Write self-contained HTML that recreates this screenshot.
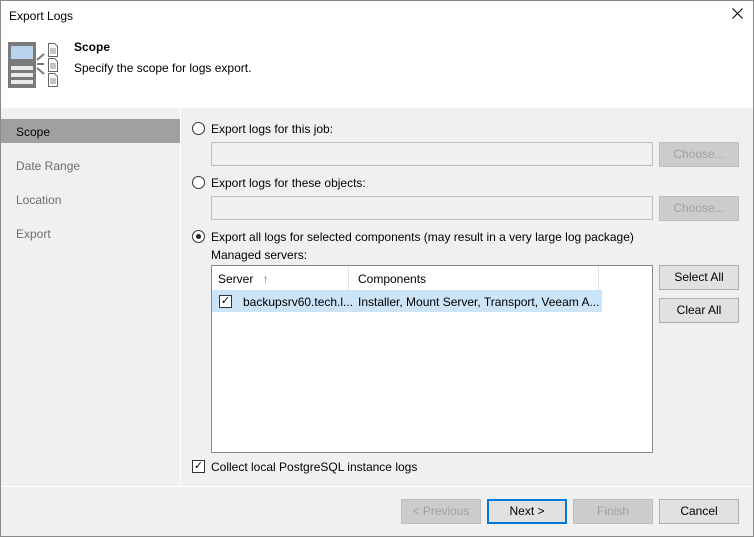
<!DOCTYPE html>
<html><head><style>
*{box-sizing:border-box;margin:0;padding:0}
body{width:754px;height:537px;font-family:"Liberation Sans",sans-serif;font-size:12px;color:#000;background:#f0f0f0;position:relative;overflow:hidden}
.abs{position:absolute}
.win{position:absolute;left:0;top:0;width:754px;height:537px;border:1px solid #8a8a8a}
.btn{position:absolute;height:25px;border:1px solid #adadad;background:#e1e1e1;text-align:center;line-height:23px;font-size:12px}
.dis{background:#ccc;border-color:#bfbfbf;color:#a0a0a0}
.field{position:absolute;height:24px;background:#f0f0f0;border:1px solid #bcbcbc}
.radio{position:absolute;width:13px;height:13px;border:1px solid #333;border-radius:50%;background:#fff}
</style></head><body>
<div class="abs" style="left:0;top:0;width:754px;height:108px;background:#fff"></div>
<div class="abs" style="left:9px;top:9px;">Export Logs</div>
<svg class="abs" style="left:732px;top:8px" width="11" height="11"><path d="M0.5 0.5L10.5 10.5M10.5 0.5L0.5 10.5" stroke="#000" stroke-width="1.1"/></svg>
<svg class="abs" style="left:8px;top:42px" width="52" height="48">
<rect x="0" y="0" width="28" height="46" fill="#7a7a7a"/>
<rect x="3" y="4" width="22" height="13" fill="#b9d3ee"/>
<rect x="3" y="24" width="22" height="4" fill="#fff" opacity=".85"/>
<rect x="3" y="31" width="22" height="4" fill="#fff" opacity=".85"/>
<rect x="3" y="38" width="22" height="4" fill="#fff" opacity=".85"/>
<path d="M29 18L36 12M29 22H36M29 26L36 32" stroke="#7a7a7a" stroke-width="2"/>
<g fill="#fff" stroke="#666" stroke-width="1"><path d="M40.5 1.5h6l3 3v10h-9z"/><path d="M40.5 16.5h6l3 3v10h-9z"/><path d="M40.5 31.5h6l3 3v10h-9z"/></g>
<g stroke="#888" stroke-width="1"><path d="M42 7h6M42 9h6M42 11h6M42 22h6M42 24h6M42 26h6M42 37h6M42 39h6M42 41h6"/></g>
</svg>
<div class="abs" style="left:74px;top:40px;font-weight:bold">Scope</div>
<div class="abs" style="left:74px;top:61px">Specify the scope for logs export.</div>
<div class="abs" style="left:180px;top:108px;width:1px;height:378px;background:#fff"></div>
<div class="abs" style="left:0;top:119px;width:180px;height:24px;background:#a0a0a0"></div>
<div class="abs" style="left:16px;top:125px">Scope</div>
<div class="abs" style="left:16px;top:159px;color:#6d6d6d">Date Range</div>
<div class="abs" style="left:16px;top:193px;color:#6d6d6d">Location</div>
<div class="abs" style="left:16px;top:227px;color:#6d6d6d">Export</div>
<div class="radio" style="left:192px;top:122px"></div>
<div class="abs" style="left:211px;top:122px">Export logs for this job:</div>
<div class="field" style="left:211px;top:142px;width:442px"></div>
<div class="btn dis" style="left:659px;top:142px;width:80px;height:25px">Choose...</div>
<div class="radio" style="left:192px;top:176px"></div>
<div class="abs" style="left:211px;top:176px">Export logs for these objects:</div>
<div class="field" style="left:211px;top:196px;width:442px"></div>
<div class="btn dis" style="left:659px;top:196px;width:80px">Choose...</div>
<div class="radio" style="left:192px;top:230px"><div class="abs" style="left:3px;top:3px;width:5px;height:5px;border-radius:50%;background:#222"></div></div>
<div class="abs" style="left:211px;top:230px">Export all logs for selected components (may result in a very large log package)</div>
<div class="abs" style="left:211px;top:248px">Managed servers:</div>
<div class="abs" style="left:211px;top:265px;width:442px;height:188px;background:#fff;border:1px solid #828790"></div>
<div class="abs" style="left:348px;top:266px;width:1px;height:24px;background:#e5e5e5"></div>
<div class="abs" style="left:598px;top:266px;width:1px;height:24px;background:#e5e5e5"></div>
<div class="abs" style="left:218px;top:272px">Server <span style="color:#3a7ec0;margin-left:6px">↑</span></div>
<div class="abs" style="left:358px;top:272px">Components</div>
<div class="abs" style="left:212px;top:290px;width:390px;height:22px;background:#cce4f7"></div>
<div class="abs" style="left:219px;top:295px;width:13px;height:13px;border:1px solid #333;background:#fff;font-size:11px;line-height:11px;text-align:center">✓</div>
<div class="abs" style="left:243px;top:295px">backupsrv60.tech.l...</div>
<div class="abs" style="left:358px;top:295px">Installer, Mount Server, Transport, Veeam A...</div>
<div class="btn" style="left:659px;top:265px;width:80px">Select All</div>
<div class="btn" style="left:659px;top:298px;width:80px">Clear All</div>
<div class="abs" style="left:192px;top:460px;width:13px;height:13px;border:1px solid #333;background:#fff;font-size:11px;line-height:11px;text-align:center">✓</div>
<div class="abs" style="left:211px;top:460px">Collect local PostgreSQL instance logs</div>
<div class="abs" style="left:0;top:486px;width:754px;height:1px;background:#fff"></div>
<div class="btn dis" style="left:401px;top:499px;width:80px">&lt; Previous</div>
<div class="btn" style="left:487px;top:499px;width:80px;border:2px solid #0078d7;line-height:21px">Next &gt;</div>
<div class="btn dis" style="left:573px;top:499px;width:80px">Finish</div>
<div class="btn" style="left:659px;top:499px;width:80px">Cancel</div>
<div class="win"></div>
</body></html>
